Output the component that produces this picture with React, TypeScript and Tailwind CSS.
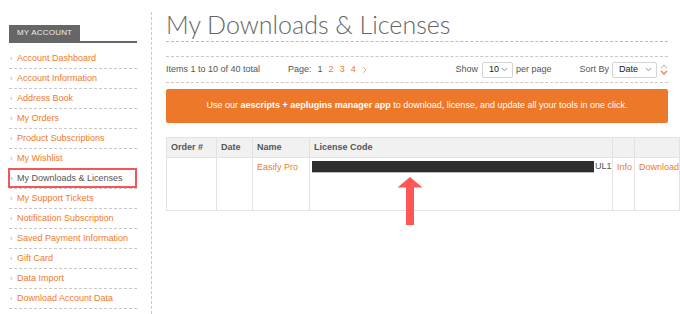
import React from "react"

const menu = [
    "Account Dashboard",
    "Account Information",
    "Address Book",
    "My Orders",
    "Product Subscriptions",
    "My Wishlist",
    "My Downloads & Licenses",
    "My Support Tickets",
    "Notification Subscription",
    "Saved Payment Information",
    "Gift Card",
    "Data Import",
    "Download Account Data",
]

const ACTIVE = "My Downloads & Licenses"

function Select({ value, width }: { value: string; width: string }) {
    return (
        <div className={`${width} h-[16px] border border-[#d4d4d4] rounded-[2px] bg-white flex items-center justify-between pl-[6px] pr-[4px] text-[9px] text-[#222]`}>
            <span>{value}</span>
            <svg width="7" height="5" viewBox="0 0 7 5" fill="none">
                <path d="M0.8 1 L3.5 3.8 L6.2 1" stroke="#888" strokeWidth="0.9" />
            </svg>
        </div>
    )
}

export default function App() {
    return (
        <div className="relative w-[680px] h-[314px] bg-white flex overflow-hidden font-['Liberation_Sans',Arial,sans-serif] text-[9px] text-[#555]">
            {/* Sidebar */}
            <aside className="ml-[9px] w-[128px] pt-[25px] shrink-0">
                <div className="border-b-2 border-[#666] flex">
                    <span className="bg-[#666] text-[#eee] text-[8px] uppercase px-[8px] h-[16px] leading-[16px] tracking-[0.2px]">My Account</span>
                </div>
                <ul className="mt-[6px]">
                    {menu.map((item) => {
                        const active = item === ACTIVE
                        return (
                            <li key={item} className="relative h-[20px] border-b border-dashed border-[#c8c8c8] flex items-center">
                                <span className={`w-[8px] pl-[1px] text-[8px] ${active ? "text-[#999]" : "text-[#f39a5e]"}`}>›</span>
                                <span className={active ? "text-[#555]" : "text-[#f07a2b]"}>{item}</span>
                                {active && (
                                    <div className="absolute -left-px -top-px right-0 bottom-0 border-2 border-[#f0575b]" />
                                )}
                            </li>
                        )
                    })}
                </ul>
            </aside>

            {/* Main */}
            <div className="ml-[14px] mt-[12px] border-l border-dashed border-[#c8c8c8] pl-[14px] flex-1">
                <main className="w-[502px]">
                    <h1 className="font-['Lato',sans-serif] font-light text-[25px] leading-[25px] text-[#666] pb-[4px] border-b border-dashed border-[#bbb]">
                        My Downloads &amp; Licenses
                    </h1>

                    {/* Toolbar */}
                    <div className="mt-[14px] h-[27px] border-y border-dashed border-[#c8c8c8] flex items-center">
                        <span>Items 1 to 10 of 40 total</span>
                        <span className="ml-[28px]">Page:</span>
                        <span className="ml-[6px]">1</span>
                        <span className="ml-[6px] text-[#f07a2b]">2</span>
                        <span className="ml-[6px] text-[#f07a2b]">3</span>
                        <span className="ml-[6px] text-[#f07a2b]">4</span>
                        <svg className="ml-[6px]" width="5" height="8" viewBox="0 0 5 8" fill="none">
                            <path d="M1 1 L4 4 L1 7" stroke="#f5a26a" strokeWidth="0.9" />
                        </svg>

                        <div className="ml-auto flex items-center">
                            <span>Show</span>
                            <div className="ml-[4px]"><Select value="10" width="w-[31px]" /></div>
                            <span className="ml-[3px]">per page</span>
                            <span className="ml-[28px]">Sort By</span>
                            <div className="ml-[3px]"><Select value="Date" width="w-[45px]" /></div>
                            <div className="ml-[3px] flex flex-col gap-[1px]">
                                <svg width="8" height="5" viewBox="0 0 8 5" fill="none">
                                    <path d="M1 4.2 L4 1 L7 4.2" stroke="#aaa" strokeWidth="1" />
                                </svg>
                                <svg width="8" height="5" viewBox="0 0 8 5" fill="none">
                                    <path d="M1 0.8 L4 4 L7 0.8" stroke="#f07a2b" strokeWidth="1.2" />
                                </svg>
                            </div>
                        </div>
                    </div>

                    {/* Banner */}
                    <div className="mt-[6px] h-[34px] bg-[#ee782a] rounded-[2px] flex items-center justify-center text-white text-[9px]">
                        <span>
                            Use our <b>aescripts + aeplugins manager app</b> to download, license, and update all your tools in one click.
                        </span>
                    </div>

                    {/* Table */}
                    <table className="mt-[14px] w-[513px] table-fixed border-collapse border border-[#e2e2e2]">
                        <colgroup>
                            <col className="w-[50px]" />
                            <col className="w-[36px]" />
                            <col className="w-[57px]" />
                            <col className="w-[303px]" />
                            <col className="w-[22px]" />
                            <col className="w-[45px]" />
                        </colgroup>
                        <thead>
                            <tr className="h-[20px] bg-[#f1f1f1] text-left text-[#555]">
                                <th className="px-[4px] font-bold border border-[#e2e2e2]">Order #</th>
                                <th className="px-[4px] font-bold border border-[#e2e2e2]">Date</th>
                                <th className="px-[4px] font-bold border border-[#e2e2e2]">Name</th>
                                <th className="px-[4px] font-bold border border-[#e2e2e2]">License Code</th>
                                <th className="border border-[#e2e2e2]"></th>
                                <th className="border border-[#e2e2e2]"></th>
                            </tr>
                        </thead>
                        <tbody>
                            <tr className="h-[53px] align-top">
                                <td className="border border-[#e2e2e2]"></td>
                                <td className="border border-[#e2e2e2]"></td>
                                <td className="px-[4px] pt-[3px] border border-[#e2e2e2] text-[#f07a2b]">Easify Pro</td>
                                <td className="pl-[2px] pt-[2px] border border-[#e2e2e2]">
                                    <div className="flex items-center">
                                        <div className="w-[282px] h-[12px] bg-[#2e2e2e] border-b border-[#bbb]" />
                                        <span className="ml-[1px]">UL1</span>
                                    </div>
                                </td>
                                <td className="px-[4px] pt-[3px] border border-[#e2e2e2] text-[#f07a2b]">Info</td>
                                <td className="pl-[4px] pt-[3px] border border-[#e2e2e2] text-[#f07a2b] whitespace-nowrap">Download</td>
                            </tr>
                        </tbody>
                    </table>
                </main>
            </div>

            {/* Annotation arrow */}
            <svg className="absolute left-[397px] top-[177px]" width="26" height="49" viewBox="0 0 26 49" fill="#ff5757">
                <polygon points="13,0 25.5,10.5 17,10.5 17,48 9,48 9,10.5 0.5,10.5" />
            </svg>
        </div>
    )
}
